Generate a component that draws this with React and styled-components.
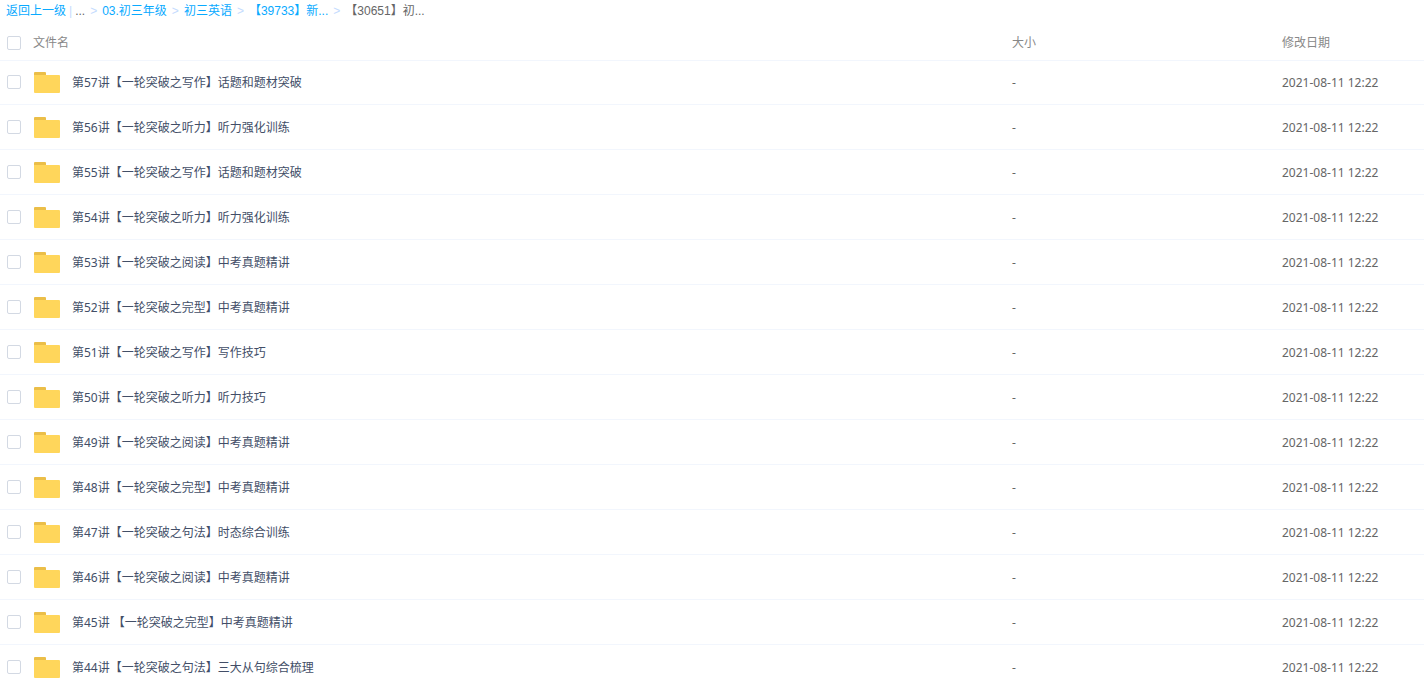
import React from 'react';
import styled, { createGlobalStyle } from 'styled-components';

const GlobalStyle = createGlobalStyle`
  body {
    margin: 0;
    background: #fff;
    color: #666;
    font-family: "Noto Sans", "Noto Sans CJK SC", sans-serif;
    font-size: 12px;
  }
`;

const Breadcrumb = styled.nav`
  display: flex;
  align-items: center;
  height: 22px;
  padding-left: 6px;
  font-family: "Liberation Sans", "Noto Sans CJK SC", sans-serif;
  line-height: 22px;
  white-space: pre;
`;

const Crumb = styled.a`
  color: #09aaff;
  text-decoration: none;
`;

const Divider = styled.span`
  margin: 0 3px;
  color: #c4dbfe;
`;

const Separator = styled.span`
  margin: 0 5px;
  color: #c4dbfe;
`;

const FileTable = styled.table`
  width: 100%;
  table-layout: fixed;
  border-collapse: separate;
  border-spacing: 0;
`;

const HeadCell = styled.th`
  box-sizing: border-box;
  width: ${(p) => p.$width};
  height: 39px;
  padding: 3px 0 0;
  border-bottom: 1px solid #f2f6fd;
  color: #888;
  font-weight: 400;
  line-height: 18px;
  text-align: left;
`;

const Cell = styled.td`
  box-sizing: border-box;
  height: 45px;
  padding: 0;
  border-bottom: 1px solid #f2f6fd;
  line-height: 18px;

  tr:first-child > & {
    height: 44px;
    padding-bottom: 1px;
  }
`;

const NameGroup = styled.div`
  display: flex;
  align-items: center;
  padding-left: 7px;
`;

const Checkbox = styled.input.attrs({ type: 'checkbox' })`
  appearance: none;
  box-sizing: border-box;
  flex: none;
  width: 14px;
  height: 14px;
  margin: 0 12px 0 0;
  border: 1px solid #d3d9e3;
  border-radius: 2px;
  background: #fff;

  &:checked {
    border-color: #09aaff;
    background: #09aaff;
  }
`;

const Folder = styled.svg`
  flex: none;
  width: 26px;
  height: 22px;
  margin: 0 12px 0 1px;
`;

const FileLink = styled.a`
  padding-top: 2px;
  color: #424e67;
  text-decoration: none;
  white-space: nowrap;
`;

const Value = styled.div`
  padding-top: 2px;
  white-space: nowrap;
`;

const crumbs = ['03.初三年级', '初三英语', '【39733】新...'];

const files = [
  '第57讲【一轮突破之写作】话题和题材突破',
  '第56讲【一轮突破之听力】听力强化训练',
  '第55讲【一轮突破之写作】话题和题材突破',
  '第54讲【一轮突破之听力】听力强化训练',
  '第53讲【一轮突破之阅读】中考真题精讲',
  '第52讲【一轮突破之完型】中考真题精讲',
  '第51讲【一轮突破之写作】写作技巧',
  '第50讲【一轮突破之听力】听力技巧',
  '第49讲【一轮突破之阅读】中考真题精讲',
  '第48讲【一轮突破之完型】中考真题精讲',
  '第47讲【一轮突破之句法】时态综合训练',
  '第46讲【一轮突破之阅读】中考真题精讲',
  '第45讲 【一轮突破之完型】中考真题精讲',
  '第44讲【一轮突破之句法】三大从句综合梳理',
];

function FolderIcon() {
  return (
    <Folder viewBox="0 0 26 22" aria-hidden="true">
      <path d="M0 5V2a1 1 0 0 1 1-1h10a1 1 0 0 1 1 1v3z" fill="#ebbe48" />
      <path d="M0 4h25a1 1 0 0 1 1 1v16a1 1 0 0 1-1 1H1a1 1 0 0 1-1-1z" fill="#ffd65b" />
    </Folder>
  );
}

export default function App() {
  return (
    <>
      <GlobalStyle />
      <Breadcrumb>
        <Crumb href="#">返回上一级</Crumb>
        <Divider>|</Divider>
        <span>...</span>
        {crumbs.map((name) => (
          <React.Fragment key={name}>
            <Separator>&gt;</Separator>
            <Crumb href="#">{name}</Crumb>
          </React.Fragment>
        ))}
        <Separator>&gt;</Separator>
        <span>【30651】初...</span>
      </Breadcrumb>
      <FileTable>
        <thead>
          <tr>
            <HeadCell $width="auto">
              <NameGroup>
                <Checkbox id="all" />
                <label htmlFor="all">文件名</label>
              </NameGroup>
            </HeadCell>
            <HeadCell $width="270px">大小</HeadCell>
            <HeadCell $width="142px">修改日期</HeadCell>
          </tr>
        </thead>
        <tbody>
          {files.map((name) => (
            <tr key={name}>
              <Cell>
                <NameGroup>
                  <Checkbox aria-label={name} />
                  <FolderIcon />
                  <FileLink href="#">{name}</FileLink>
                </NameGroup>
              </Cell>
              <Cell>
                <Value>-</Value>
              </Cell>
              <Cell>
                <Value>2021-08-11 12:22</Value>
              </Cell>
            </tr>
          ))}
        </tbody>
      </FileTable>
    </>
  );
}
